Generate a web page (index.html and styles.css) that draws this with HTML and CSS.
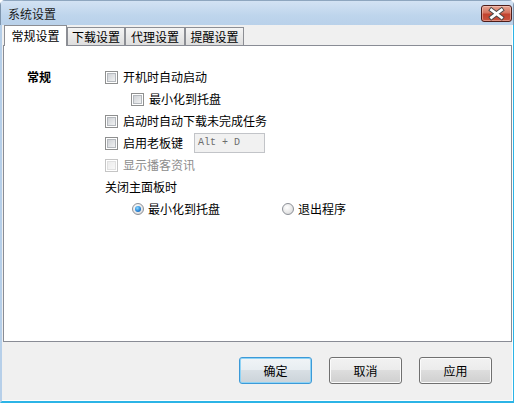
FILE: index.html
```html
<!DOCTYPE html>
<html lang="zh-CN">
<head>
<meta charset="utf-8">
<title>系统设置</title>
<link rel="stylesheet" href="styles.css">
</head>
<body>
<div class="window">
  <div class="titlebar">
    <span class="title">系统设置</span>
    <div class="close">
      <svg width="29" height="15" viewBox="0 0 29 15">
        <path d="M9.5 4 L19.5 11.5 M19.5 4 L9.5 11.5" stroke="#464646" stroke-width="4.6" stroke-linecap="square" fill="none"/>
        <path d="M9.5 4 L19.5 11.5 M19.5 4 L9.5 11.5" stroke="#ffffff" stroke-width="2.8" stroke-linecap="square" fill="none"/>
      </svg>
    </div>
  </div>
  <div class="client">
    <div class="tabs">
      <div class="tab active">常规设置</div>
      <div class="tab w58">下载设置</div>
      <div class="tab w60">代理设置</div>
      <div class="tab w59">提醒设置</div>
    </div>
    <div class="panel">
      <div class="section">
        <div class="section-label">常规</div>
        <div class="options">
          <div class="row"><span class="cb"></span><span class="lbl">开机时自动启动</span></div>
          <div class="row indent"><span class="cb"></span><span class="lbl">最小化到托盘</span></div>
          <div class="row"><span class="cb"></span><span class="lbl">启动时自动下载未完成任务</span></div>
          <div class="row"><span class="cb"></span><span class="lbl key-lbl">启用老板键</span><span class="keybox">Alt + D</span></div>
          <div class="row disabled"><span class="cb"></span><span class="lbl">显示播客资讯</span></div>
          <div class="row"><span class="plain">关闭主面板时</span></div>
          <div class="row radios">
            <span class="radio-item first"><span class="rb checked"></span><span class="rlbl">最小化到托盘</span></span>
            <span class="radio-item"><span class="rb"></span><span class="rlbl">退出程序</span></span>
          </div>
        </div>
      </div>
    </div>
    <div class="footer">
      <div class="btn default">确定</div>
      <div class="btn">取消</div>
      <div class="btn">应用</div>
    </div>
  </div>
</div>
</body>
</html>
```
FILE: styles.css
```css
html, body {
  margin: 0;
  padding: 0;
  background: #ffffff;
}
body {
  width: 516px;
  height: 404px;
  overflow: hidden;
  font-family: "Noto Sans CJK SC", "Noto Sans", sans-serif;
  font-size: 12px;
  color: #000;
}
.window {
  width: 514px;
  height: 403px;
  display: flex;
  flex-direction: column;
  border-radius: 5px 5px 0 0;
  overflow: hidden;
}
.titlebar {
  height: 25px;
  flex: none;
  display: flex;
  align-items: flex-start;
  box-sizing: border-box;
  padding-left: 7px;
  background: linear-gradient(#d3e2f3, #bed5ec 60%, #b9d1ea);
  border-top: 1px solid #8ea6bf;
  border-left: 1px solid #7e95ad;
  border-right: 1px solid #7e95ad;
}
.title {
  line-height: 20px;
  padding-top: 3px;
  color: #1a1a1a;
}
.close {
  margin-left: auto;
  margin-top: 4px;
  margin-right: 1px;
  width: 29px;
  height: 15px;
  border: 1px solid #4d1d1a;
  border-radius: 3px;
  background: linear-gradient(#e6a592, #d4735f 45%, #c2432f 55%, #c9543f 100%);
  box-shadow: inset 0 0 0 1px rgba(255,220,210,0.45);
  display: flex;
}
.client {
  flex: 1;
  display: flex;
  flex-direction: column;
  background: #f0f0f0;
  border-left: 2px solid #b6cfe9;
  border-right: 1px solid #2cb4e6;
  border-bottom: 2px solid #2cb4e6;
  box-shadow: inset -1px -1px 0 #ffffff;
}
.tabs {
  height: 20px;
  flex: none;
  display: flex;
  align-items: flex-end;
  padding-left: 2px;
}
.tab {
  box-sizing: border-box;
  height: 18px;
  line-height: 17px;
  text-align: center;
  border: 1px solid #8c8e94;
  border-bottom: none;
  background: linear-gradient(#f4f4f4, #e9e9e9 50%, #dedede);
}
.tab.w58 { width: 58px; }
.tab.w60 { width: 60px; }
.tab.w59 { width: 59px; }
.tab.active {
  width: 63px;
  height: 21px;
  line-height: 20px;
  margin-bottom: -1px;
  background: #ffffff;
  position: relative;
  z-index: 1;
}
.panel {
  height: 297px;
  flex: none;
  box-sizing: border-box;
  margin: 0 1px 0 1px;
  background: #ffffff;
  border: 1px solid #898c95;
  padding: 20px 0 0 23px;
}
.section {
  display: flex;
}
.section-label {
  width: 78px;
  flex: none;
  font-weight: bold;
  height: 22px;
  line-height: 22px;
}
.options {
  display: flex;
  flex-direction: column;
}
.row {
  height: 22px;
  display: flex;
  align-items: center;
}
.row.indent { padding-left: 26px; }
.cb {
  width: 13px;
  height: 13px;
  box-sizing: border-box;
  border: 1px solid #8e8f8f;
  background: #ffffff;
  padding: 1px;
  margin-right: 5px;
  flex: none;
}
.cb::after {
  content: "";
  display: block;
  width: 9px;
  height: 9px;
  box-sizing: border-box;
  border: 1px solid #b4b8bd;
  background: linear-gradient(135deg, #cfd2d6, #f0f1f2);
}
.lbl, .plain, .rlbl {
  line-height: 22px;
  white-space: nowrap;
}
.key-lbl { margin-right: 11px; }
.keybox {
  box-sizing: border-box;
  width: 71px;
  height: 20px;
  border: 1px solid #c2c4c8;
  background: #f1f1f1;
  font-family: "Liberation Mono", "DejaVu Sans Mono", monospace;
  font-size: 10px;
  line-height: 18px;
  color: #6d6d6d;
  padding-left: 3px;
}
.row.disabled .cb {
  border-color: #c5c5c5;
}
.row.disabled .cb::after {
  border-color: #e0e0e0;
  background: linear-gradient(135deg, #ececec, #f7f7f7);
}
.row.disabled .lbl { color: #8d8d8d; }
.row.radios { padding-left: 27px; }
.radio-item {
  display: flex;
  align-items: center;
}
.radio-item.first { width: 150px; }
.rb {
  width: 12px;
  height: 12px;
  box-sizing: border-box;
  border-radius: 50%;
  border: 1px solid #8c9097;
  background: radial-gradient(circle at 40% 35%, #ffffff, #e8e8e8 55%, #cfd0d2);
  margin-right: 4px;
  display: flex;
  align-items: center;
  justify-content: center;
  flex: none;
}
.rb.checked::after {
  content: "";
  width: 6px;
  height: 6px;
  border-radius: 50%;
  background: radial-gradient(circle at 40% 35%, #8fdcff, #2a86d8 55%, #174d94);
}
.footer {
  flex: 1;
  display: flex;
  justify-content: flex-end;
  align-items: flex-start;
  gap: 17px;
  padding: 15px 21px 0 0;
}
.btn {
  box-sizing: border-box;
  width: 73px;
  height: 27px;
  border: 1px solid #707070;
  border-radius: 3px;
  background: linear-gradient(#f2f2f2, #ebebeb 50%, #dddddd 50%, #cfcfcf);
  box-shadow: inset 0 0 0 1px #fbfbfb;
  text-align: center;
  line-height: 25px;
}
.btn.default {
  border-color: #3c9ad8;
  box-shadow: inset 0 0 0 1px #8fd3f5;
  background: linear-gradient(#f0f4f7, #e7edf1 50%, #d8dfe4 50%, #cbd3d9);
}
```
